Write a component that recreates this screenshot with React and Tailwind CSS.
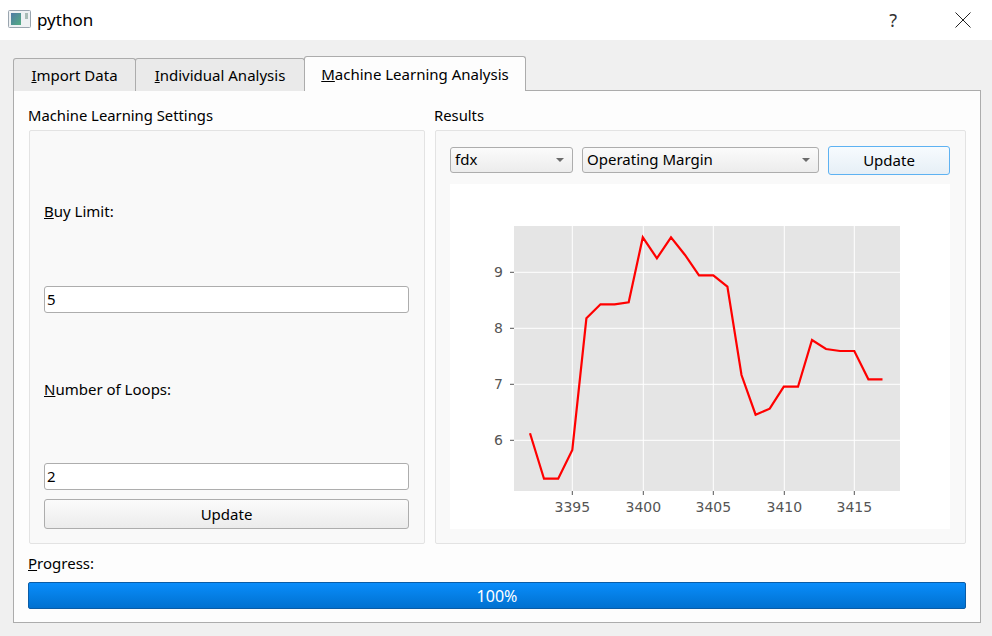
const points = [
  [530, 433.3], [544, 478.7], [558.2, 478.7], [572.3, 450], [586.4, 318.3], [600.5, 304.3],
  [614.6, 304.3], [628.7, 302.3], [642.8, 237.3], [656.9, 258.3], [671, 237.3], [685, 255],
  [699, 275.3], [713.3, 275.3], [727.4, 286.7], [741.5, 375], [755.6, 414.7], [769.7, 408.7],
  [783.8, 386.7], [798, 386.7], [812, 340], [826, 349], [840, 351], [854.3, 351],
  [868.4, 379.3], [882.5, 379.3],
];

const xTicks = [
  { x: 572.3, label: "3395" },
  { x: 643.3, label: "3400" },
  { x: 713.3, label: "3405" },
  { x: 784.3, label: "3410" },
  { x: 854.3, label: "3415" },
];

const yTicks = [
  { y: 272.3, label: "9" },
  { y: 328.3, label: "8" },
  { y: 384.3, label: "7" },
  { y: 440.3, label: "6" },
];

// chart svg sits at x=450, y=184 in the window
function Chart() {
  return (
    <svg width="500" height="345" viewBox="450 184 500 345" className="block bg-white">
      <rect x="514" y="226" width="386" height="265" fill="#e5e5e5" />
      {xTicks.map((tick) => (
        <g key={tick.label}>
          <line x1={tick.x} x2={tick.x} y1="226" y2="491" stroke="#fff" strokeWidth="1" />
          <line x1={tick.x} x2={tick.x} y1="491" y2="495" stroke="#555" strokeWidth="1" />
          <text x={tick.x} y="512" textAnchor="middle" fontSize="14" fill="#555" fontFamily="'DejaVu Sans', sans-serif">
            {tick.label}
          </text>
        </g>
      ))}
      {yTicks.map((tick) => (
        <g key={tick.label}>
          <line x1="514" x2="900" y1={tick.y} y2={tick.y} stroke="#fff" strokeWidth="1" />
          <line x1="510" x2="514" y1={tick.y} y2={tick.y} stroke="#555" strokeWidth="1" />
          <text x="503" y={tick.y + 5} textAnchor="end" fontSize="14" fill="#555" fontFamily="'DejaVu Sans', sans-serif">
            {tick.label}
          </text>
        </g>
      ))}
      <polyline points={points.map((p) => p.join(",")).join(" ")} fill="none" stroke="#ff0000" strokeWidth="2.2" strokeLinejoin="miter" />
    </svg>
  );
}

function WindowIcon() {
  return (
    <svg width="24" height="20" viewBox="0 0 24 20" className="block">
      <defs>
        <linearGradient id="iconFill" x1="0" y1="0" x2="1" y2="1">
          <stop offset="0" stopColor="#4f7aa5" />
          <stop offset="1" stopColor="#53ad82" />
        </linearGradient>
      </defs>
      <rect x="0.5" y="0.5" width="22" height="17" rx="1" fill="#eef1f3" stroke="#9aa5af" />
      <rect x="3" y="3" width="10" height="12" fill="url(#iconFill)" />
      <rect x="17" y="3" width="3" height="6" fill="#a9bcb6" />
    </svg>
  );
}

function Combo({ label, className }) {
  return (
    <div className={`mb-px flex h-[26px] items-center justify-between rounded-[3px] border border-[#adadad] bg-gradient-to-b from-[#fbfbfb] to-[#ececec] pl-1 pr-2 ${className}`}>
      <span className="-mt-px">{label}</span>
      <span className="h-0 w-0 border-x-[4px] border-t-[4px] border-x-transparent border-t-[#6b6b6b]" />
    </div>
  );
}

function TextBox({ value }) {
  return (
    <div className="flex h-[27px] items-center rounded-[3px] border border-[#adadad] bg-white pl-0.5">
      {value}
    </div>
  );
}

export default function App() {
  return (
    <div className="h-[636px] w-[992px] overflow-hidden bg-[#f0f0f0] text-[15px] text-black [font-family:'Noto_Sans',sans-serif]">
      <div className="flex h-10 items-center bg-white pl-2">
        <WindowIcon />
        <span className="ml-[5px] text-[17px]">python</span>
        <span className="ml-[796px] text-[18px] text-[#333]">?</span>
        <svg width="16" height="16" viewBox="0 0 16 16" className="ml-[58px]">
          <path d="M0.5 0.5L15.5 15.5M15.5 0.5L0.5 15.5" stroke="#222" strokeWidth="1" />
        </svg>
      </div>

      <div className="pl-[13px] pr-[11px] pt-4">
        <div className="relative z-10 -mb-px flex h-[35px] items-end">
          <div className="flex h-[33px] w-[123px] items-center justify-center rounded-t-[3px] border border-b-0 border-[#acacac] bg-[#eaeaea]">
            <span><u>I</u>mport Data</span>
          </div>
          <div className="-ml-px flex h-[33px] w-[170px] items-center justify-center rounded-t-[3px] border border-b-0 border-[#acacac] bg-[#eaeaea]">
            <span><u>I</u>ndividual Analysis</span>
          </div>
          <div className="-ml-px flex h-[35px] w-[222px] items-center justify-center rounded-t-[3px] border border-b-0 border-[#acacac] bg-[#fdfdfd]">
            <span><u>M</u>achine Learning Analysis</span>
          </div>
        </div>

        <div className="h-[533px] border border-[#acacac] bg-[#fdfdfd] px-[14px] pt-[14px]">
          <div className="flex gap-[10px]">
            <div className="ml-px w-[396px]">
              <div className="-ml-px flex h-[25px] items-start text-[14.8px] leading-[20px]">Machine Learning Settings</div>
              <div className="h-[414px] rounded-[2px] border border-[#e3e3e3] bg-[#f9f9f9] pl-[14px] pr-[15px]">
                <div className="mt-[70px] flex h-5 items-center"><span><u>B</u>uy Limit:</span></div>
                <div className="mt-[65px]"><TextBox value="5" /></div>
                <div className="mt-[66px] flex h-5 items-center"><span><u>N</u>umber of Loops:</span></div>
                <div className="mt-[64px]"><TextBox value="2" /></div>
                <div className="mt-[9px] flex h-[30px] items-center justify-center rounded-[3px] border border-[#adadad] bg-gradient-to-b from-[#fbfbfb] to-[#ececec]">
                  Update
                </div>
              </div>
            </div>

            <div className="w-[531px]">
              <div className="-ml-px flex h-[25px] items-start text-[14.8px] leading-[20px]">Results</div>
              <div className="h-[414px] rounded-[2px] border border-[#e3e3e3] bg-[#f9f9f9] pl-[14px] pr-[15px] pt-[15px]">
                <div className="flex h-[29px] items-center">
                  <Combo label="fdx" className="w-[123px]" />
                  <Combo label="Operating Margin" className="ml-[9px] w-[237px]" />
                  <div className="ml-[9px] flex h-[29px] w-[122px] items-center justify-center rounded-[3px] border border-[#5eb2f2] bg-gradient-to-b from-[#f7fbfe] to-[#e6eff6]">
                    Update
                  </div>
                </div>
                <div className="mt-[9px]">
                  <Chart />
                </div>
              </div>
            </div>
          </div>

          <div className="mt-[9px] flex h-[21px] items-center">
            <span><u>P</u>rogress:</span>
          </div>
          <div className="mt-[8px] flex h-[27px] w-[938px] items-center justify-center rounded-[2px] border border-[#0a5ca6] bg-gradient-to-b from-[#0a8dfb] to-[#0171d0] text-[16px] text-white">
            100%
          </div>
        </div>
      </div>
    </div>
  );
}
